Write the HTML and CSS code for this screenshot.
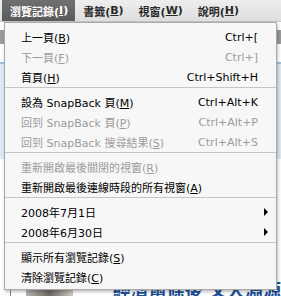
FILE: index.html
```html
<!DOCTYPE html>
<html lang="zh-Hant">
<head>
    <meta charset="UTF-8">
    <meta name="viewport" content="width=device-width, initial-scale=1.0">
    <title>瀏覽記錄</title>
    <link rel="stylesheet" href="styles.css">
</head>
<body>
    <div class="menubar">
        <div class="bar-item active">瀏覽記錄(<u>I</u>)</div>
        <div class="bar-item">書籤(<u>B</u>)</div>
        <div class="bar-item">視窗(<u>W</u>)</div>
        <div class="bar-item">說明(<u>H</u>)</div>
    </div>

    <!-- page behind the menu -->
    <div class="page">
        <div class="page-top"></div>
        <div class="page-nav"></div>
        <div class="page-panel"></div>
        <div class="page-body">
            <div class="thumb"></div>
            <a class="headline" href="#">經濟蕭條後 文人淵源</a>
        </div>
    </div>

    <div class="dropdown">
        <div class="item"><span class="label">上一頁(<u>B</u>)</span><span class="key">Ctrl+[</span></div>
        <div class="item disabled"><span class="label">下一頁(<u>F</u>)</span><span class="key">Ctrl+]</span></div>
        <div class="item"><span class="label">首頁(<u>H</u>)</span><span class="key">Ctrl+Shift+H</span></div>
        <div class="sep"></div>
        <div class="item"><span class="label">設為 SnapBack 頁(<u>M</u>)</span><span class="key">Ctrl+Alt+K</span></div>
        <div class="item disabled"><span class="label">回到 SnapBack 頁(<u>P</u>)</span><span class="key">Ctrl+Alt+P</span></div>
        <div class="item disabled"><span class="label">回到 SnapBack 搜尋結果(<u>S</u>)</span><span class="key">Ctrl+Alt+S</span></div>
        <div class="sep"></div>
        <div class="item disabled"><span class="label">重新開啟最後關閉的視窗(<u>R</u>)</span></div>
        <div class="item"><span class="label">重新開啟最後連線時段的所有視窗(<u>A</u>)</span></div>
        <div class="sep"></div>
        <div class="item sub"><span class="label">2008年7月1日</span><span class="arrow"></span></div>
        <div class="item sub"><span class="label">2008年6月30日</span><span class="arrow"></span></div>
        <div class="sep"></div>
        <div class="item"><span class="label">顯示所有瀏覽記錄(<u>S</u>)</span></div>
        <div class="item"><span class="label">清除瀏覽記錄(<u>C</u>)</span></div>
    </div>
</body>
</html>
```

FILE: styles.css
```css
body {
    margin: 0;
    font-family: "DejaVu Sans", "Noto Sans CJK TC", sans-serif;
    background-color: #ffffff;
    overflow: hidden;
}
u {
    text-decoration: underline;
    text-underline-offset: 1px;
}
.menubar {
    display: flex;
    height: 21px;
    padding-left: 2px;
    background: linear-gradient(#eeeeee, #dedede);
    border-bottom: 1px solid #c4c4c4;
    font-size: 11px;
    font-weight: bold;
    color: #2a2a2a;
}
.bar-item {
    display: flex;
    align-items: center;
    padding: 0 7px 0 8px;
}
.bar-item.active {
    background: linear-gradient(#707070, #5a5a5a);
    color: #ffffff;
}
.page {
    display: flex;
    flex-direction: column;
}
.page-top {
    height: 8px;
    background-color: #ffffff;
}
.page-nav {
    height: 14px;
    background-color: #9a9a9a;
}
.page-panel {
    height: 95px;
    margin-top: 18px;
    background-color: #dde8f3;
    border-top: 2px solid #9cc0e0;
}
.page-body {
    display: flex;
    align-items: flex-end;
    height: 137px;
    padding-left: 11px;
    border-left: 1px solid #888888;
    margin-left: 10px;
}
.thumb {
    width: 55px;
    height: 14px;
    margin-left: 4px;
    background: linear-gradient(90deg, #b9b4ad, #6d6964, #cfc9c2);
}
.headline {
    margin-left: 40px;
    margin-bottom: -6px;
    font-size: 18px;
    font-weight: bold;
    color: #1d4f9a;
    white-space: nowrap;
}
.dropdown {
    position: absolute;
    top: 22px;
    left: 4px;
    width: 271px;
    padding: 4px 0 2px 0;
    background-color: #f7f7f7;
    border: 1px solid #a9a9a9;
    box-shadow: 1px 2px 3px rgba(0, 0, 0, 0.25);
    font-size: 11px;
    color: #000000;
}
.item {
    display: flex;
    justify-content: space-between;
    align-items: center;
    height: 20px;
    padding: 0 18px 0 16px;
}
.item.disabled {
    color: #9c9c9c;
}
.item.sub {
    padding-right: 8px;
}
.arrow {
    width: 0;
    height: 0;
    border-top: 4px solid transparent;
    border-bottom: 4px solid transparent;
    border-left: 4px solid #000000;
}
.sep {
    height: 1px;
    margin: 0 0 4px 0;
    background-color: #c6c6c6;
}
```
